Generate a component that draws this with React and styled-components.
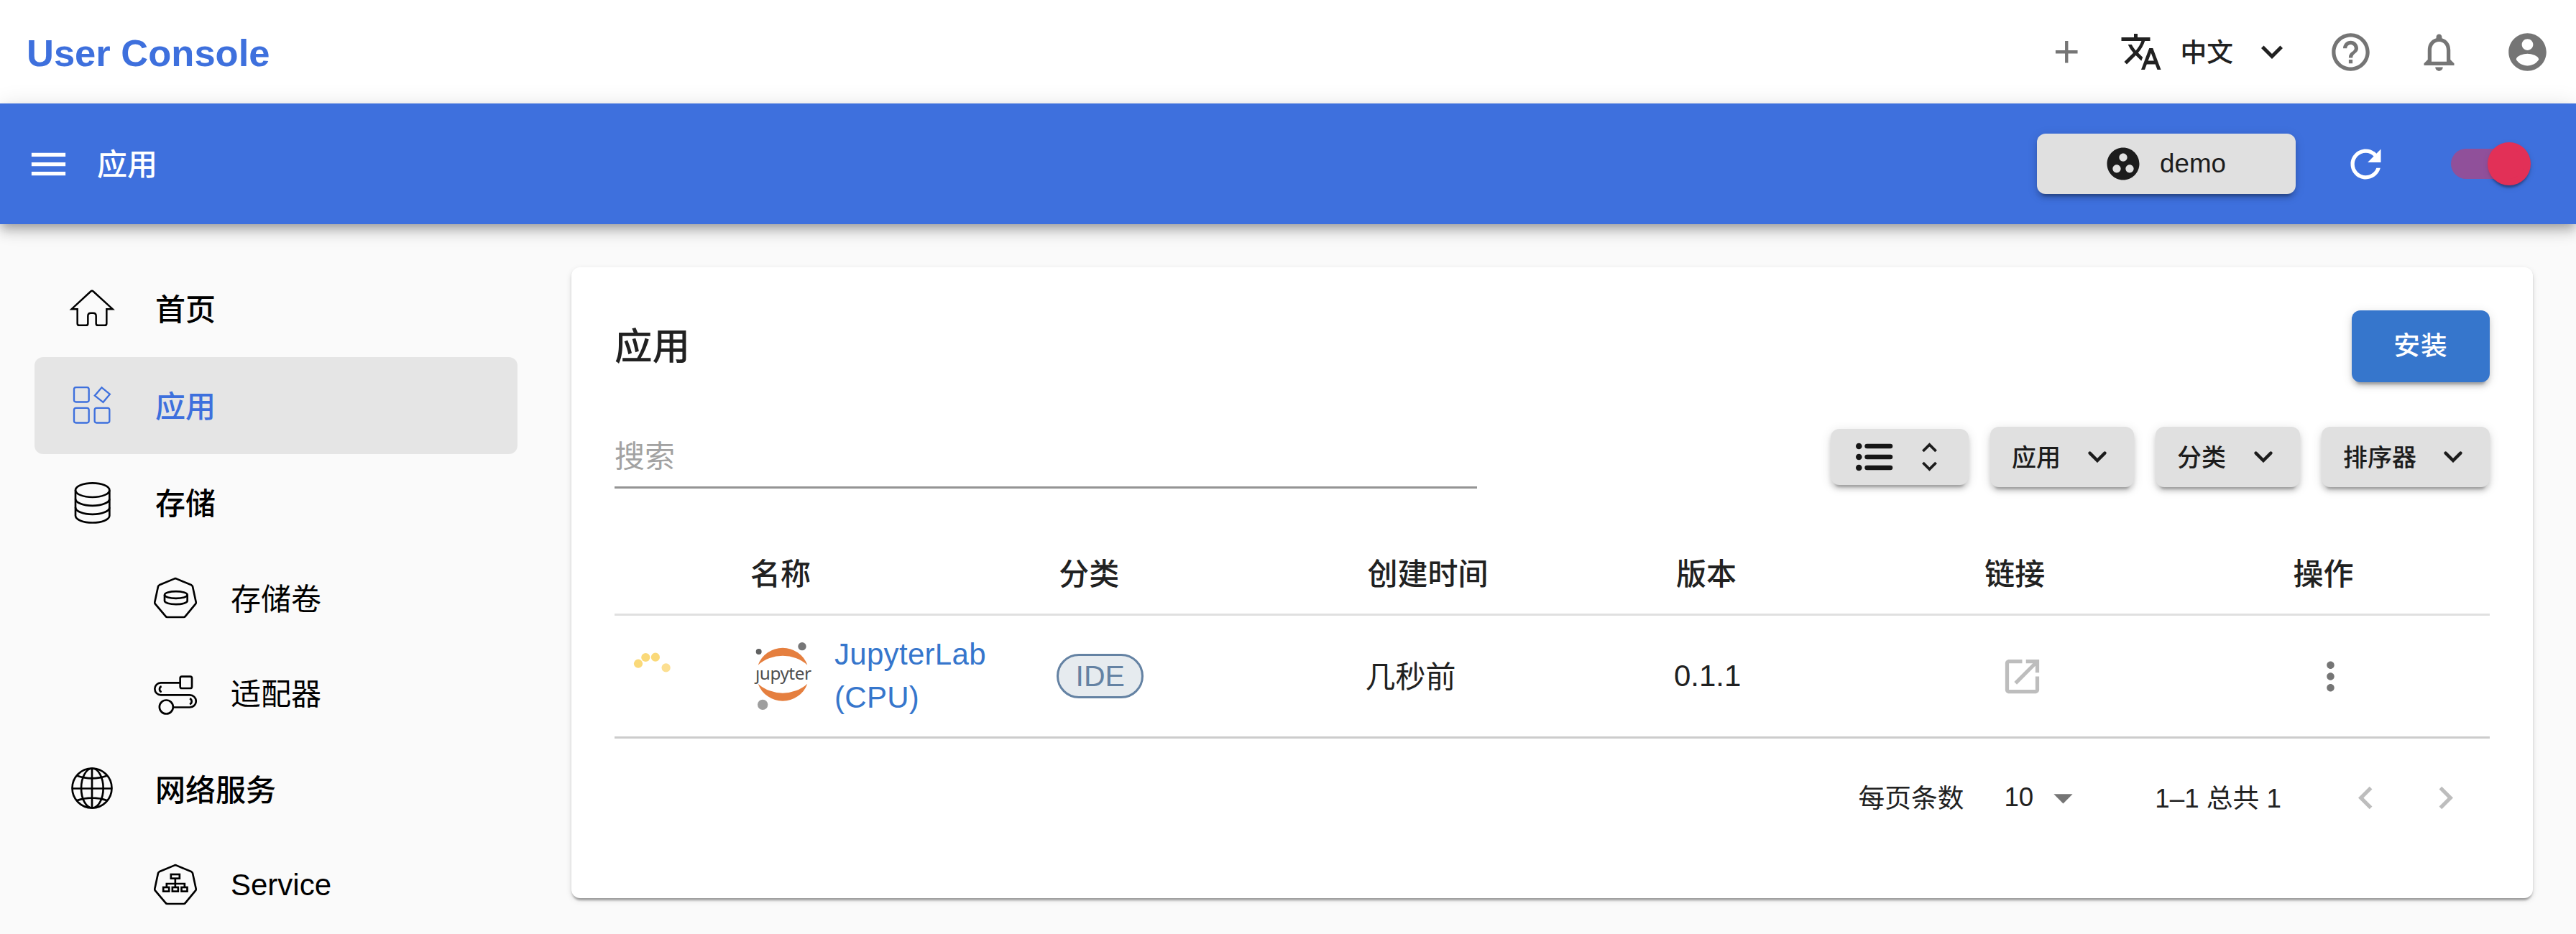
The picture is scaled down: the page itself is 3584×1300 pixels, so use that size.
import React from "react";
import styled, { createGlobalStyle, css } from "styled-components";

const GlobalStyle = createGlobalStyle`
  * { box-sizing: border-box; }
  html, body { margin: 0; padding: 0; background: #fafafa; }
  body {
    font-family: "Liberation Sans", "Noto Sans CJK SC", sans-serif;
    font-size: 42px;
    line-height: 60px;
    color: #212121;
    overflow: hidden;
  }
  svg { display: block; flex: none; }
`;

const PRIMARY = "#3e70dd";
const LINK = "#3676cc";

const elevation1 = css`
  box-shadow: 0 6px 3px -3px rgba(0, 0, 0, 0.2), 0 3px 3px 0 rgba(0, 0, 0, 0.14),
    0 3px 9px 0 rgba(0, 0, 0, 0.12);
`;
const elevation2 = css`
  box-shadow: 0 9px 3px -6px rgba(0, 0, 0, 0.2), 0 6px 6px 0 rgba(0, 0, 0, 0.14),
    0 3px 15px 0 rgba(0, 0, 0, 0.12);
`;

/* ---------- icons ---------- */

const PATHS = {
  add: "M19 13h-6v6h-2v-6H5v-2h6V5h2v6h6v2z",
  translate:
    "M12.87 15.07l-2.54-2.51.03-.03c1.74-1.94 2.98-4.17 3.71-6.53H17V4h-7V2H8v2H1v1.99h11.17C11.5 7.92 10.44 9.75 9 11.35 8.07 10.32 7.3 9.19 6.69 8h-2c.73 1.63 1.73 3.17 2.98 4.56l-5.09 5.02L4 19l5-5 3.11 3.11.76-2.04zM18.5 10h-2L12 22h2l1.12-3h4.75L21 22h2l-4.5-12zm-2.62 7l1.62-4.33L19.12 17h-3.24z",
  expand: "M16.59 8.59L12 13.17 7.41 8.59 6 10l6 6 6-6z",
  help: "M11 18h2v-2h-2v2zm1-16C6.48 2 2 6.48 2 12s4.48 10 10 10 10-4.48 10-10S17.52 2 12 2zm0 18c-4.41 0-8-3.59-8-8s3.59-8 8-8 8 3.59 8 8-3.59 8-8 8zm0-14c-2.21 0-4 1.79-4 4h2c0-1.1.9-2 2-2s2 .9 2 2c0 2-3 1.75-3 5h2c0-2.25 3-2.5 3-5 0-2.21-1.79-4-4-4z",
  bell: "M12 22c1.1 0 2-.9 2-2h-4c0 1.1.9 2 2 2zm6-6v-5c0-3.07-1.63-5.64-4.5-6.32V4c0-.83-.67-1.5-1.5-1.5s-1.5.67-1.5 1.5v.68C7.64 5.36 6 7.92 6 11v5l-2 2v1h16v-1l-2-2zm-2 1H8v-6c0-2.48 1.51-4.5 4-4.5s4 2.02 4 4.5v6z",
  account:
    "M12 2C6.48 2 2 6.48 2 12s4.48 10 10 10 10-4.48 10-10S17.52 2 12 2zm0 3c1.66 0 3 1.34 3 3s-1.34 3-3 3-3-1.34-3-3 1.34-3 3-3zm0 14.2c-2.5 0-4.71-1.28-6-3.22.03-1.99 4-3.08 6-3.08 1.99 0 5.97 1.09 6 3.08-1.29 1.94-3.5 3.22-6 3.22z",
  menu: "M3 18h18v-2H3v2zm0-5h18v-2H3v2zm0-7v2h18V6H3z",
  group:
    "M12 2C6.48 2 2 6.48 2 12s4.48 10 10 10 10-4.48 10-10S17.52 2 12 2zM8 17.5c-1.38 0-2.5-1.12-2.5-2.5s1.12-2.5 2.5-2.5 2.5 1.12 2.5 2.5-1.12 2.5-2.5 2.5zM9.5 8c0-1.38 1.12-2.5 2.5-2.5s2.5 1.12 2.5 2.5-1.12 2.5-2.5 2.5S9.5 9.38 9.5 8zm6.5 9.5c-1.38 0-2.5-1.12-2.5-2.5s1.12-2.5 2.5-2.5 2.5 1.12 2.5 2.5-1.12 2.5-2.5 2.5z",
  refresh:
    "M17.65 6.35C16.2 4.9 14.21 4 12 4c-4.42 0-7.99 3.58-7.99 8s3.57 8 7.99 8c3.73 0 6.84-2.55 7.73-6h-2.08c-.82 2.33-3.04 4-5.65 4-3.31 0-6-2.69-6-6s2.69-6 6-6c1.66 0 3.14.69 4.22 1.78L13 11h7V4l-2.35 2.35z",
  open: "M19 19H5V5h7V3H5c-1.11 0-2 .9-2 2v14c0 1.1.89 2 2 2h14c1.1 0 2-.9 2-2v-7h-2v7zM14 3v2h3.59l-9.83 9.83 1.41 1.41L19 6.41V10h2V3h-7z",
  more: "M12 8c1.1 0 2-.9 2-2s-.9-2-2-2-2 .9-2 2 .9 2 2 2zm0 2c-1.1 0-2 .9-2 2s.9 2 2 2 2-.9 2-2-.9-2-2-2zm0 6c-1.1 0-2 .9-2 2s.9 2 2 2 2-.9 2-2-.9-2-2-2z",
  dropdown: "M7 10l5 5 5-5z",
  left: "M15.41 16.59L10.83 12l4.58-4.59L14 6l-6 6 6 6 1.41-1.41z",
  right: "M8.59 16.59L13.17 12l-4.58-4.59L10 6l6 6-6 6-1.41-1.41z",
};

const Icon = ({ name, size = 63, color = "#757575" }) => (
  <svg width={size} height={size} viewBox="0 0 24 24" fill={color}>
    <path d={PATHS[name]} />
  </svg>
);

const LineIcon = ({ size, viewBox, stroke = 8, children }) => (
  <svg
    width={size}
    height={size}
    viewBox={viewBox}
    fill="none"
    stroke="currentColor"
    strokeWidth={stroke}
  >
    {children}
  </svg>
);

const HomeIcon = () => (
  <LineIcon size={64} viewBox="48 52.5 192 192" stroke={7.5}>
    <path d="M144 73Q147 73 149 75L230 149H205V209Q205 217 197 217H169Q161 217 161 209V178Q161 166 149 166H139Q127 166 127 178V209Q127 217 119 217H91Q83 217 83 209V149H59L139 75Q141 73 144 73Z" />
  </LineIcon>
);

const AppsIcon = () => (
  <LineIcon size={64} viewBox="48 457.5 192 192" stroke={7}>
    <rect x="69" y="476" width="62" height="61" rx="8" />
    <rect x="69" y="562" width="62" height="62" rx="8" />
    <rect x="155" y="562" width="62" height="62" rx="8" />
    <path d="M184.5 476.5L218.5 504.5L190.5 538L155.5 510.5Z" />
  </LineIcon>
);

const DatabaseIcon = () => (
  <LineIcon size={64} viewBox="48 862.5 192 192">
    <ellipse cx="146" cy="905" rx="71" ry="29.5" />
    <path d="M75 905V1012A71 29 0 0 0 217 1012V905" />
    <path d="M75 941A71 29 0 0 0 217 941" />
    <path d="M75 977A71 29 0 0 0 217 977" />
  </LineIcon>
);

const HEPTAGON =
  "M487 77Q492 74 497 77L559 103Q563 105 564 109L578 174Q579 178 576 182L534 233Q531 237 527 237H458Q454 237 451 233L408 182Q405 178 406 174L420 109Q421 105 425 103Z";

const VolumeIcon = () => (
  <LineIcon size={60} viewBox="402 69 180 180">
    <path d={HEPTAGON} />
    <ellipse cx="494.5" cy="144" rx="47.5" ry="14.5" />
    <path d="M447 144V169A47.5 14.5 0 0 0 542 169V144" />
  </LineIcon>
);

const AdapterIcon = () => (
  <LineIcon size={60} viewBox="402 465 180 180">
    <rect x="512" y="485" width="49" height="49" rx="7" />
    <path d="M512 511H431.5A25.5 25.5 0 0 0 431.5 562H552.5A25.75 25.75 0 0 1 552.5 613.5H482" />
    <circle cx="454" cy="612" r="28.5" />
    <path d="M434 526A13 13 0 0 0 434 550" />
    <path d="M552 577A13 13 0 0 1 552 601" />
  </LineIcon>
);

const GlobeIcon = () => (
  <LineIcon size={64} viewBox="48 859.5 192 192">
    <circle cx="144" cy="949.5" r="82.5" />
    <ellipse cx="145" cy="949.5" rx="46" ry="82.5" />
    <path d="M144 867V1032M62 951H227M80 897Q144 920 208 897M80 1001Q144 979 208 1001" />
  </LineIcon>
);

const ServiceIcon = () => (
  <LineIcon size={60} viewBox="402 69 180 180">
    <path d={HEPTAGON} />
    <rect x="473.5" y="114" width="36" height="17" />
    <path d="M491.5 131V167M455.5 167V153H530.5V167" />
    <rect x="441.5" y="168" width="24" height="17" />
    <rect x="479.5" y="168" width="24" height="17" />
    <rect x="517.5" y="168" width="24" height="17" />
  </LineIcon>
);

const ListIcon = () => (
  <svg width="52" height="40" viewBox="0 0 52 40">
    {[5, 20, 35].map((y) => (
      <g key={y}>
        <circle cx="4.3" cy={y} r="4.3" fill="#161616" />
        <rect x="12.3" y={y - 3.3} width="39" height="6.6" rx="3.3" fill="#161616" />
      </g>
    ))}
  </svg>
);

const UpDownIcon = () => (
  <svg width="21" height="40" viewBox="0 0 21 40" fill="none" stroke="#1c1c1c" strokeWidth="3.8">
    <path d="M1.4 12L10.5 2.9L19.6 12M1.4 28L10.5 37.1L19.6 28" />
  </svg>
);

const Chevron = () => (
  <svg width="26" height="16" viewBox="0 0 26 16" fill="none" stroke="#1c1c1c" strokeWidth="4.4" strokeLinecap="round">
    <path d="M2.6 2.6L13 13L23.4 2.6" strokeLinejoin="miter" />
  </svg>
);

const Spinner = () => (
  <svg width="72" height="72" viewBox="3 0 72 72" fill="#fad979">
    <circle cx="15" cy="18.7" r="6.1" />
    <circle cx="25.3" cy="10" r="6.1" />
    <circle cx="38.9" cy="9.7" r="6.1" />
    <circle cx="53.6" cy="24.4" r="6.1" fill="#fcdf91" />
  </svg>
);

const JupyterLogo = () => (
  <svg width="84" height="96" viewBox="531 70 252 288">
    <path d="M554 168A109.7 109.7 0 0 1 760 168A155.5 155.5 0 0 0 554 168Z" fill="#e57f3f" />
    <path d="M554 246A109.7 109.7 0 0 0 760 246A155.5 155.5 0 0 1 554 246Z" fill="#e57f3f" />
    <circle cx="557" cy="112" r="12" fill="#616262" />
    <circle cx="738" cy="90" r="17" fill="#767677" />
    <circle cx="573.5" cy="333.5" r="21.5" fill="#9e9e9e" />
    <text
      x="543"
      y="228"
      fontFamily="Noto Sans, Open Sans, sans-serif"
      fontSize="73"
      textLength="234"
      fill="#4e4e4e"
    >
      ȷupyter
    </text>
  </svg>
);

/* ---------- top areas ---------- */

const Header = styled.header`
  height: 144px;
  padding: 0 36px 0 37px;
  display: flex;
  align-items: center;
  justify-content: space-between;
  background: #fff;
`;

const Brand = styled.h1`
  margin: 0;
  font-size: 52.5px;
  font-weight: 700;
  color: ${PRIMARY};
  padding-top: 3px;
`;

const HeaderActions = styled.div`
  display: flex;
  align-items: center;
  gap: 60px;
`;

const Language = styled.div`
  display: flex;
  align-items: center;
  gap: 24px;
  font-size: 36.75px;
  font-weight: 500;
  margin: 0 -12px;

  span {
    padding-top: 3px;
  }
`;

const AppBar = styled.div`
  height: 168px;
  padding: 0 36px;
  display: flex;
  align-items: center;
  background: ${PRIMARY};
  color: #fff;
  box-shadow: 0 6px 12px -3px rgba(0, 0, 0, 0.2), 0 12px 15px 0 rgba(0, 0, 0, 0.14),
    0 3px 30px 0 rgba(0, 0, 0, 0.12);
`;

const BarTitle = styled.span`
  flex: 1;
  margin-left: 36px;
  padding-top: 4px;
  font-weight: 500;
`;

const ProjectButton = styled.button`
  width: 360px;
  height: 84px;
  margin-right: 66px;
  padding: 0 4px 0 0;
  border: 0;
  border-radius: 12px;
  background: #e0e0e0;
  display: flex;
  align-items: center;
  justify-content: center;
  gap: 24px;
  font: inherit;
  font-size: 36.75px;
  font-weight: 500;
  color: #1c1c1c;
  ${elevation2}
`;

const Switch = styled.div`
  width: 174px;
  height: 114px;
  margin-left: 51px;
  padding: 36px;
  display: grid;
  align-items: center;

  &::before,
  &::after {
    content: "";
    grid-area: 1 / 1;
  }
  &::before {
    width: 102px;
    height: 42px;
    border-radius: 21px;
    background: #e23057;
    opacity: 0.5;
  }
  &::after {
    width: 60px;
    height: 60px;
    margin: -9px -9px -9px 51px;
    border-radius: 50%;
    background: #e23057;
    ${elevation1}
  }
`;

/* ---------- sidebar ---------- */

const Body = styled.div`
  display: flex;
  height: 988px;
`;

const Sidebar = styled.nav`
  width: 795px;
  padding: 50px 75px 0 48px;
  flex: none;
`;

const NavItem = styled.a`
  height: ${(p) => (p.$sub ? 132 : 135)}px;
  padding-left: ${(p) => (p.$sub ? 166 : 48)}px;
  display: flex;
  align-items: center;
  gap: ${(p) => (p.$sub ? 47 : 56)}px;
  border-radius: 12px;
  color: ${(p) => (p.$active ? PRIMARY : "#000")};
  background: ${(p) => (p.$active ? "#e5e5e5" : "transparent")};
  font-weight: ${(p) => (p.$sub ? 400 : 500)};
`;

const NavLabel = styled.span`
  padding-top: ${(p) => (p.$latin ? 0 : 4)}px;
`;

/* ---------- main card ---------- */

const Card = styled.main`
  width: 2729px;
  height: 878px;
  margin-top: 60px;
  padding: 60px 60px 0;
  background: #fff;
  border-radius: 12px;
  ${elevation1}
`;

const CardHeader = styled.div`
  height: 100px;
  display: flex;
  align-items: center;
  justify-content: space-between;
`;

const Title = styled.h2`
  margin: 0;
  padding-top: 2px;
  font-size: 52.5px;
  font-weight: 500;
`;

const InstallButton = styled.button`
  width: 192px;
  height: 100px;
  border: 0;
  border-radius: 12px;
  background: ${LINK};
  color: #fff;
  font: inherit;
  font-size: 36.75px;
  font-weight: 500;
  letter-spacing: 1px;
  ${elevation2}
`;

const Toolbar = styled.div`
  height: 84px;
  margin-top: 62px;
  display: flex;
  align-items: center;
  gap: 30px;
`;

const Search = styled.div`
  width: 1200px;
  height: 86px;
  margin: 0 auto 0 0;
  align-self: flex-start;
  padding-top: 12px;
  border-bottom: 3px solid #949494;
  color: #a2a2a2;
`;

const ToolButton = styled.button`
  width: ${(p) => p.$width}px;
  height: ${(p) => p.$height || 84}px;
  padding: 0 ${(p) => p.$right || 38}px 0 ${(p) => p.$left || 30}px;
  border: 0;
  border-radius: 12px;
  background: #e0e0e0;
  display: flex;
  align-items: center;
  justify-content: space-between;
  font: inherit;
  font-size: 34px;
  font-weight: 500;
  color: #1c1c1c;
  ${elevation2}

  span {
    padding-top: 2px;
  }
`;

const Row = styled.div`
  display: grid;
  grid-template-columns: 189px repeat(5, 429.3px) 1fr;
  align-items: center;
`;

const HeadRow = styled(Row)`
  height: 115px;
  margin-top: 64px;
  padding-top: 3px;
  border-bottom: 3px solid #e0e0e0;
  font-weight: 500;
`;

const DataRow = styled(Row)`
  height: 171px;
  border-bottom: 3px solid #ccc;
`;

const NameCell = styled.div`
  display: flex;
  align-items: center;
  gap: 30px;
  padding-left: 3px;
`;

const AppLink = styled.a`
  width: 230px;
  letter-spacing: 0.3px;
  color: ${LINK};
`;

const TextCell = styled.span`
  margin-left: -3px;
  padding-top: ${(p) => (p.$latin ? 0 : 3)}px;
`;

const Chip = styled.span`
  width: 121px;
  height: 62px;
  margin-left: -3px;
  display: flex;
  align-items: center;
  justify-content: center;
  border: 3px solid #6482a3;
  border-radius: 31px;
  background: #e6ebef;
  color: #6482a3;
  font-size: 41px;
`;

const ActionCell = styled.div`
  padding-left: 21px;
`;

const Pagination = styled.div`
  height: 165px;
  padding-right: 30px;
  display: flex;
  align-items: center;
  justify-content: flex-end;
  font-size: 36.75px;
`;

const PageLabel = styled.span`
  padding-top: 2px;
`;

const PageSize = styled.div`
  display: flex;
  align-items: center;
  gap: 10px;
  margin: 0 96px 0 56px;

  span {
    padding-bottom: 2px;
  }
`;

const Pager = styled.div`
  display: flex;
  gap: 48px;
  margin-left: 86px;
`;

const NAV = [
  { label: "首页", icon: <HomeIcon /> },
  { label: "应用", icon: <AppsIcon />, active: true },
  { label: "存储", icon: <DatabaseIcon /> },
  { label: "存储卷", icon: <VolumeIcon />, sub: true },
  { label: "适配器", icon: <AdapterIcon />, sub: true },
  { label: "网络服务", icon: <GlobeIcon /> },
  { label: "Service", icon: <ServiceIcon />, sub: true, latin: true },
];

const COLUMNS = ["", "名称", "分类", "创建时间", "版本", "链接", "操作"];

const FILTERS = [
  { label: "应用", width: 200 },
  { label: "分类", width: 201 },
  { label: "排序器", width: 234 },
];

export default function App() {
  return (
    <>
      <GlobalStyle />
      <Header>
        <Brand>User Console</Brand>
        <HeaderActions>
          <Icon name="add" size={52.5} />
          <Language>
            <Icon name="translate" size={60} color="#212121" />
            <span>中文</span>
            <Icon name="expand" size={60} color="#212121" />
          </Language>
          <Icon name="help" />
          <Icon name="bell" />
          <Icon name="account" />
        </HeaderActions>
      </Header>
      <AppBar>
        <Icon name="menu" color="#fff" />
        <BarTitle>应用</BarTitle>
        <ProjectButton>
          <Icon name="group" size={54} color="#1c1c1c" />
          demo
        </ProjectButton>
        <Icon name="refresh" color="#fff" />
        <Switch />
      </AppBar>
      <Body>
        <Sidebar>
          {NAV.map((item) => (
            <NavItem key={item.label} $sub={item.sub} $active={item.active}>
              {item.icon}
              <NavLabel $latin={item.latin}>{item.label}</NavLabel>
            </NavItem>
          ))}
        </Sidebar>
        <Card>
          <CardHeader>
            <Title>应用</Title>
            <InstallButton>安装</InstallButton>
          </CardHeader>
          <Toolbar>
            <Search>搜索</Search>
            <ToolButton $width={192} $height={78} $left={35} $right={44}>
              <ListIcon />
              <UpDownIcon />
            </ToolButton>
            {FILTERS.map((f) => (
              <ToolButton key={f.label} $width={f.width}>
                <span>{f.label}</span>
                <Chevron />
              </ToolButton>
            ))}
          </Toolbar>
          <HeadRow>
            {COLUMNS.map((c, i) => (
              <span key={i}>{c}</span>
            ))}
          </HeadRow>
          <DataRow>
            <ActionCell>
              <Spinner />
            </ActionCell>
            <NameCell>
              <JupyterLogo />
              <AppLink>JupyterLab (CPU)</AppLink>
            </NameCell>
            <Chip>IDE</Chip>
            <TextCell>几秒前</TextCell>
            <TextCell $latin>0.1.1</TextCell>
            <ActionCell>
              <Icon name="open" color="#bdbdbd" />
            </ActionCell>
            <ActionCell>
              <Icon name="more" />
            </ActionCell>
          </DataRow>
          <Pagination>
            <PageLabel>每页条数</PageLabel>
            <PageSize>
              <span>10</span>
              <Icon name="dropdown" />
            </PageSize>
            <PageLabel>1–1 总共 1</PageLabel>
            <Pager>
              <Icon name="left" color="#bdbdbd" />
              <Icon name="right" color="#bdbdbd" />
            </Pager>
          </Pagination>
        </Card>
      </Body>
    </>
  );
}
